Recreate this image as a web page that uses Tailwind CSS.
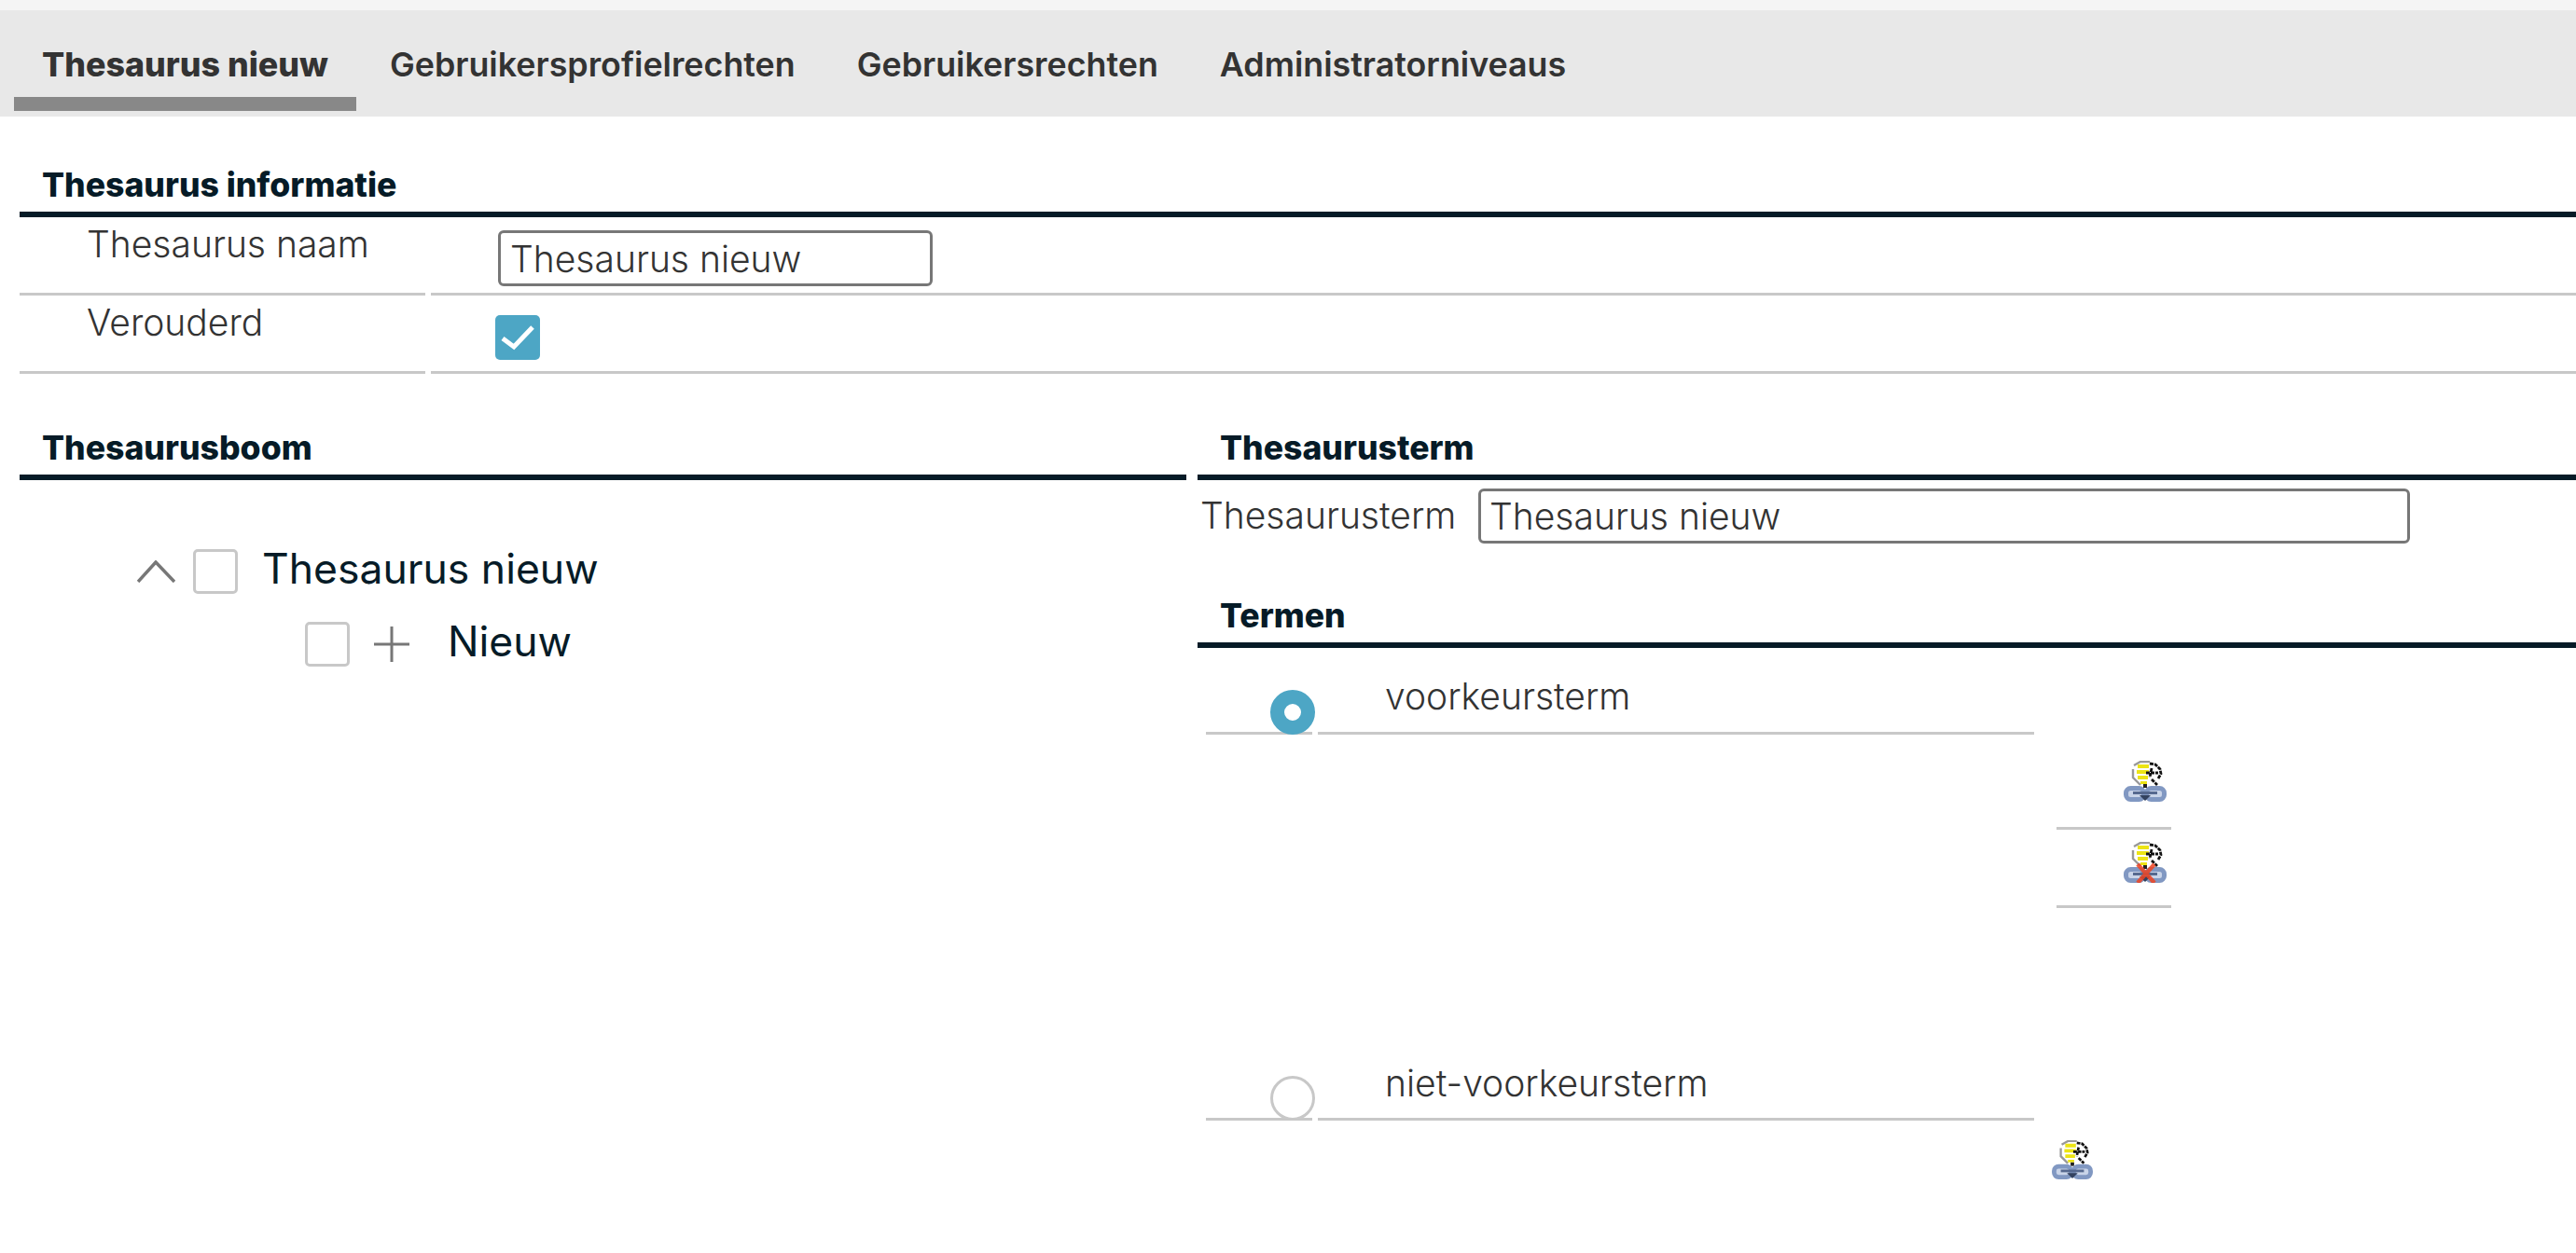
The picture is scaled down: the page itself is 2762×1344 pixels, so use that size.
<!DOCTYPE html>
<html lang="nl">
	<head>
		<meta charset="utf-8">
		<title>Thesaurus nieuw</title>
		<script src="https://cdn.jsdelivr.net/npm/@tailwindcss/browser@4"></script>
	</head>
	<body class="bg-white font-['Inter',sans-serif] font-light text-[39px] text-[#333] overflow-hidden">
		<svg class="hidden">
			<defs>
				<symbol id="thes" viewBox="0 0 46 44">
					<path d="M13 4l6-3h8l-3 3 3 18-4 6-5-6-7-8z" fill="#fff"/>
					<path d="M11 5l7-4h10M10 9v9l8 8" fill="none" stroke="#999" stroke-width="2.4"/>
					<path d="M15 4h12v4H15zM14 10h13v4H14zM15 16h11v4H15zM18 22h7v3h-7z" fill="#ece414"/>
					<path d="M21 25h4v4h-4z" fill="#222"/>
					<path d="M28 3l6 1 5 5 1 5-3 5M24 13h13M30 8l-2 10M30 20l6 6" fill="none" stroke="#111" stroke-width="2.8" stroke-dasharray="4 1"/>
					<rect x="2.5" y="29.5" width="19" height="12" rx="5" fill="#c9d4e8" stroke="#8198c2" stroke-width="5"/>
					<rect x="24.5" y="29.5" width="19" height="12" rx="5" fill="#c9d4e8" stroke="#8198c2" stroke-width="5"/>
					<path d="M10 33h26v3H10z" fill="#56698f"/>
					<path d="M17 37h12l-6 6z" fill="#33425f"/>
				</symbol>
			</defs>
		</svg>

		<div class="h-[11px] bg-[#f5f5f5]"></div>
		<nav class="h-[114px] bg-[#e8e8e8] flex gap-[6px] pl-[15px] text-[35.8px] font-semibold">
			<a class="h-[108px] px-[30px] pt-[33px] leading-[50px] border-b-[15px] border-[#888] text-[#333] font-extrabold">Thesaurus nieuw</a>
			<a class="px-[30px] pt-[33px] leading-[50px]">Gebruikersprofielrechten</a>
			<a class="px-[30px] pt-[33px] leading-[50px]">Gebruikersrechten</a>
			<a class="px-[30px] pt-[33px] leading-[50px]">Administratorniveaus</a>
		</nav>

		<section class="ml-[21px] mt-[48px]">
			<h2 class="h-[60px] pl-[24px] pt-[1px] leading-[50px] text-[35.6px] font-extrabold text-[#061b27] border-b-[6px] border-[#061b27]">Thesaurus informatie</h2>
			<div class="grid grid-cols-[435px_1fr] gap-x-[6px] auto-rows-[84px]">
				<div class="pl-[72px] leading-[58px] border-b-[3px] border-[#c8c8c8]">Thesaurus naam</div>
				<div class="pl-[72px] pt-[14px] border-b-[3px] border-[#c8c8c8]">
					<input class="block w-[466px] h-[60px] px-[10px] border-[3px] border-[#777] rounded-[6px]" value="Thesaurus nieuw">
				</div>
				<div class="pl-[72px] leading-[58px] border-b-[3px] border-[#c8c8c8]">Verouderd</div>
				<div class="pl-[69px] pt-[21px] border-b-[3px] border-[#c8c8c8]">
					<div class="w-[48px] h-[48px] rounded-[5px] bg-[#4da6c5]">
						<svg class="w-[48px] h-[48px]" viewBox="0 0 48 48"><path d="M8 25l12 9L40 13" fill="none" stroke="#fff" stroke-width="5"/></svg>
					</div>
				</div>
			</div>
		</section>

		<div class="ml-[21px] mt-[48px] flex gap-[12px]">
			<section class="w-[1251px] shrink-0">
				<h2 class="h-[66px] pl-[24px] pt-[7px] leading-[50px] text-[35.6px] font-extrabold text-[#061b27] border-b-[6px] border-[#061b27]">Thesaurusboom</h2>
				<div class="mt-[74px] text-[#061b27]">
					<div class="flex items-center h-[48px] pl-[126px]">
						<svg class="w-[41px] h-[24px]" viewBox="0 0 41 24"><path d="M1 23L20 2l20 21" fill="none" stroke="#777" stroke-width="3.5"/></svg>
						<div class="ml-[19px] w-[48px] h-[48px] rounded-[5px] border-[3px] border-[#c8c8c8]"></div>
						<span class="ml-[26px] text-[44.5px] font-normal -mt-[6px]">Thesaurus nieuw</span>
					</div>
					<div class="flex items-center h-[48px] pl-[306px] mt-[30px]">
						<div class="w-[48px] h-[48px] rounded-[5px] border-[3px] border-[#c8c8c8]"></div>
						<svg class="ml-[26px] w-[38px] h-[38px]" viewBox="0 0 38 38"><path d="M0 19h38M19 0v38" stroke="#777" stroke-width="3"/></svg>
						<span class="ml-[41px] text-[44.5px] font-normal -mt-[6px]">Nieuw</span>
					</div>
				</div>
			</section>

			<section class="flex-1">
				<h2 class="h-[66px] pl-[24px] pt-[7px] leading-[50px] text-[35.6px] font-extrabold text-[#061b27] border-b-[6px] border-[#061b27]">Thesaurusterm</h2>
				<div class="flex items-center mt-[9px] pl-[3px]">
					<label class="w-[298px]">Thesaurusterm</label>
					<input class="block w-[999px] h-[59px] px-[9px] border-[3px] border-[#777] rounded-[6px]" value="Thesaurus nieuw">
				</div>
				<h2 class="mt-[39px] h-[73px] pl-[24px] pt-[14px] leading-[50px] text-[35.6px] font-extrabold text-[#061b27] border-b-[6px] border-[#061b27]">Termen</h2>

				<div class="ml-[9px] w-[888px]">
					<div class="flex gap-[6px] h-[93px]">
						<div class="relative w-[114px] border-b-[3px] border-[#c8c8c8]">
							<div class="absolute left-[69px] top-[45px] w-[48px] h-[48px] rounded-full border-[15px] border-[#4da6c5] bg-white"></div>
						</div>
						<div class="flex-1 pl-[72px] pt-[27px] leading-[50px] border-b-[3px] border-[#c8c8c8]">voorkeursterm</div>
					</div>
					<div class="mt-[18px] ml-[912px] w-[123px]">
						<div class="h-[84px] pr-[5px] pb-[27px] flex justify-end items-end border-b-[3px] border-[#c8c8c8]">
							<svg class="w-[46px] h-[44px] blur-[0.6px]"><use href="#thes"/></svg>
						</div>
						<div class="h-[84px] pr-[5px] pb-[24px] flex justify-end items-end border-b-[3px] border-[#c8c8c8]">
							<svg class="w-[46px] h-[44px] blur-[0.6px]" viewBox="0 0 46 44">
								<use href="#thes"/>
								<path d="M15 24l18 20M33 24L15 44" stroke="#ee4422" stroke-width="4.5" opacity=".85"/>
							</svg>
						</div>
					</div>
					<div class="flex gap-[6px] h-[93px] mt-[135px]">
						<div class="relative w-[114px] border-b-[3px] border-[#c8c8c8]">
							<div class="absolute left-[69px] top-[45px] w-[48px] h-[48px] rounded-full border-[3px] border-[#c8c8c8] bg-white"></div>
						</div>
						<div class="flex-1 pl-[72px] pt-[28px] leading-[50px] border-b-[3px] border-[#c8c8c8]">niet-voorkeursterm</div>
					</div>
					<div class="mt-[21px] ml-[907px]">
						<svg class="w-[44px] h-[42px] blur-[0.6px]"><use href="#thes"/></svg>
					</div>
				</div>
			</section>
		</div>
	</body>
</html>
